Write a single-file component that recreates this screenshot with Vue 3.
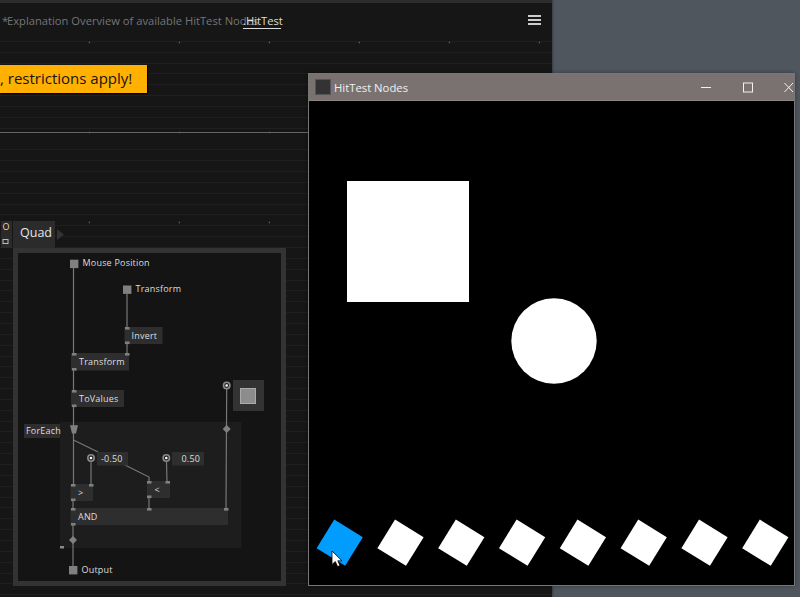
<script setup>
const nodes = [
  { x: 124.5, y: 327, w: 38, h: 17, label: 'Invert', tx: 131.5 },
  { x: 71, y: 353, w: 58, h: 17.5, label: 'Transform', tx: 79 },
  { x: 71, y: 390, w: 53, h: 17, label: 'ToValues', tx: 79 },
  { x: 24, y: 424, w: 36, h: 14, label: 'ForEach', tx: 26 },
  { x: 97, y: 452, w: 31, h: 13.5, label: '-0.50', tx: 101 },
  { x: 172, y: 452, w: 32, h: 13.5, label: '0.50', tx: 181.5 },
  { x: 70.5, y: 484, w: 22.5, h: 17, label: '>', tx: 78 },
  { x: 147, y: 481, w: 23, h: 17, label: '<', tx: 154.5 },
  { x: 70.5, y: 508, w: 157.5, h: 17, label: 'AND', tx: 78 }
]
const pins = [
  [125, 327], [125, 341.5], [72, 353], [125, 353], [72, 368], [72, 390], [72, 404.5],
  [71, 484], [89, 484], [71, 498.5], [147, 481], [165.5, 481], [147, 495.5],
  [71, 508], [147, 508], [224, 508], [71, 523]
]
const labels = [
  { x: 82.5, y: 266, t: 'Mouse Position' },
  { x: 135.5, y: 292, t: 'Transform' },
  { x: 81.5, y: 573, t: 'Output' }
]
const wires = [
  'M73.5 268V354', 'M127 294V328', 'M127 344V354', 'M73.5 370V391', 'M73.5 407V426',
  'M73.5 433V485', 'M73.5 440L98 452M125 465L149 477V482', 'M91 462V485',
  'M166.5 462L167 482', 'M73 501V509', 'M149 498V509', 'M73 525V566', 'M226.7 389L226 509'
]
const sources = [[91, 458], [166.3, 458], [226.7, 385.5]]
const junctions = [[226.7, 429], [73, 540]]
const ports = [[70, 259.7], [123, 285.5], [69, 566]]
const diamonds = Array.from({ length: 8 }, (_, i) => ({
  x: 338.7 - 308 + i * 60.8,
  fill: i === 0 ? '#009dff' : '#fff'
}))
const junctionPoints = (c) => `${c[0]},${c[1] - 4} ${c[0] + 4},${c[1]} ${c[0]},${c[1] + 4} ${c[0] - 4},${c[1]}`
</script>

<template>
  <div class="desktop">
    <section class="editor">
      <div class="strip"></div>
      <header class="head">
        <span class="star">*</span>
        <span class="crumb">Explanation Overview of available HitTest Nodes</span>
        <span class="tab">.HitTest</span>
        <span class="menu"><i></i><i></i><i></i></span>
      </header>
      <div class="banner">, restrictions apply!</div>
      <div class="rule"></div>

      <svg class="patch" width="552" height="597" viewBox="0 0 552 597">
        <rect x="1" y="221" width="11" height="27" fill="#2a2a2a" />
        <text x="2.5" y="230" class="mini">O</text>
        <rect x="3" y="239.5" width="5" height="4" fill="none" stroke="#bbb" stroke-width="1" />
        <rect x="13" y="221" width="42" height="27" fill="#2b2b2b" />
        <text x="20" y="237" class="quad">Quad</text>
        <path d="M57 229L64 234.5L57 240Z" fill="#333" />

        <rect x="15.5" y="250.5" width="268" height="333" fill="#141414" stroke="#333" stroke-width="5" />
        <rect x="60" y="421.7" width="181.5" height="126.3" fill="#1d1d1d" />

        <path v-for="w in wires" :key="w" :d="w" fill="none" stroke="#777" stroke-width="1.2" />

        <g v-for="n in nodes" :key="n.label">
          <rect :x="n.x" :y="n.y" :width="n.w" :height="n.h" fill="#2e2e2e" />
          <text :x="n.tx" :y="n.y + n.h / 2 + 3" class="lbl">{{ n.label }}</text>
        </g>

        <rect v-for="(p, i) in pins" :key="i" :x="p[0]" :y="p[1]" width="4.5" height="2.6" fill="#808080" />
        <rect v-for="p in ports" :key="p[1]" :x="p[0]" :y="p[1]" width="8.4" height="8.4" fill="#808080" />
        <text v-for="l in labels" :key="l.t" :x="l.x" :y="l.y" class="lbl">{{ l.t }}</text>

        <path d="M70 425.3H78L76 433.5H72Z" fill="#808080" />
        <polygon v-for="j in junctions" :key="j[1]" :points="junctionPoints(j)" fill="#808080" />
        <g v-for="s in sources" :key="s[1] + s[0]">
          <circle :cx="s[0]" :cy="s[1]" r="3.2" fill="#222" stroke="#8a8a8a" stroke-width="1.6" />
          <circle :cx="s[0]" :cy="s[1]" r="1.3" fill="#fff" />
        </g>
        <rect x="60" y="546" width="4" height="2.5" fill="#888" />
        <rect x="233" y="380" width="31" height="31" fill="#333" />
        <rect x="240.5" y="388.5" width="15" height="15" fill="#8c8c8c" stroke="#aaa" stroke-width="1" />
      </svg>
    </section>

    <section class="window">
      <div class="titlebar">
        <span class="app-icon"></span>
        <span class="title">HitTest Nodes</span>
        <svg class="controls" width="110" height="26" viewBox="0 0 110 26">
          <path d="M17 13.5H27" />
          <rect x="59.5" y="9" width="9" height="9" />
          <path d="M101.5 9L110 18M110 9L101.5 18" transform="translate(-1)" />
        </svg>
      </div>
      <svg class="stage" width="485" height="485" viewBox="0 0 485 485">
        <rect x="38" y="80" width="122" height="121" fill="#fff" />
        <circle cx="245" cy="240" r="42.7" fill="#fff" />
        <rect
          v-for="d in diamonds"
          :key="d.x"
          x="-16.8"
          y="-16.8"
          width="33.6"
          height="33.6"
          :fill="d.fill"
          :transform="`translate(${d.x} 441.7) rotate(31.7)`"
        />
      </svg>
      <svg class="cursor" width="13" height="18" viewBox="0 0 13 18">
        <path d="M1 1V14.5L4.3 11.6L6.6 16.6L9 15.5L6.8 10.8H11Z" fill="#fff" stroke="#000" stroke-width="0.8" />
      </svg>
    </section>
  </div>
</template>

<style scoped>
.desktop {
  position: relative;
  width: 800px;
  height: 597px;
  overflow: hidden;
  background: #4f565e;
  font-family: "Open Sans", "Noto Sans", sans-serif;
}
.editor {
  position: relative;
  width: 552px;
  height: 597px;
  overflow: hidden;
  box-shadow: 1px 0 2px rgba(0, 0, 0, 0.3);
  background-color: #161616;
  background-image:
    radial-gradient(circle at 89.5px 42.5px, #5a5a5a 0.8px, transparent 1.1px),
    repeating-linear-gradient(to bottom, transparent 0, transparent 9.85px, #1f1f1f 9.85px, #1f1f1f 10.85px);
  background-size: 90px 90px, 100% 100%;
  background-position: 0 0, 0 31px;
}
.strip {
  height: 3px;
  background: #2c2c2c;
}
.head {
  display: flex;
  align-items: center;
  height: 34px;
  padding-left: 2px;
  background: #161616;
  font-size: 11.2px;
}
.star {
  width: 5px;
  color: #777;
}
.crumb {
  color: #757575;
  width: 236px;
  white-space: nowrap;
}
.tab {
  width: 38px;
  border-bottom: 1px solid #ddd;
  padding-bottom: 0;
  line-height: 15px;
  text-align: center;
  color: #ddd;
  margin-top: 1px;
}
.menu {
  display: flex;
  flex-direction: column;
  gap: 2.6px;
  width: 13px;
  margin-left: 247px;
}
.menu i {
  height: 1.4px;
  background: #ccc;
}
.banner {
  width: 147px;
  height: 28px;
  margin-top: 28px;
  padding-right: 15px;
  box-sizing: border-box;
  background: #ffb000;
  color: #141414;
  font-size: 15px;
  line-height: 27px;
  text-align: right;
  white-space: nowrap;
  overflow: hidden;
  box-shadow: 1px 1px 1px #000;
}
.rule {
  height: 1px;
  margin-top: 39px;
  background: #666;
}
.patch {
  position: absolute;
  left: 0;
  top: 0;
}
.mini {
  font-size: 9px;
  fill: #ddd;
  font-family: "Open Sans", sans-serif;
}
.quad {
  font-size: 12.5px;
  fill: #e6e6e6;
  font-family: "Open Sans", sans-serif;
}
.lbl {
  font-size: 9px;
  fill: #dedede;
  letter-spacing: 0.2px;
  font-family: "Open Sans", sans-serif;
}
.window {
  position: absolute;
  left: 308px;
  top: 73px;
  width: 487px;
  height: 513px;
  box-sizing: border-box;
  border: 1px solid #777;
  background: #000;
  box-shadow: 0 0 4px rgba(0, 0, 0, 0.35);
}
.titlebar {
  display: flex;
  align-items: center;
  height: 26px;
  background: #7a7270;
  border-bottom: 1px solid #8a8583;
  box-sizing: content-box;
}
.app-icon {
  width: 14px;
  height: 14px;
  margin-left: 6px;
  background: #333;
  border: 0.5px solid #555;
}
.title {
  margin-left: 3px;
  font-size: 11.3px;
  color: #f0f0f0;
}
.controls {
  margin-left: auto;
}
.controls path,
.controls rect {
  fill: none;
  stroke: #f2f2f2;
  stroke-width: 1;
}
.stage {
  display: block;
}
.cursor {
  position: absolute;
  left: 22px;
  top: 476px;
}
</style>
